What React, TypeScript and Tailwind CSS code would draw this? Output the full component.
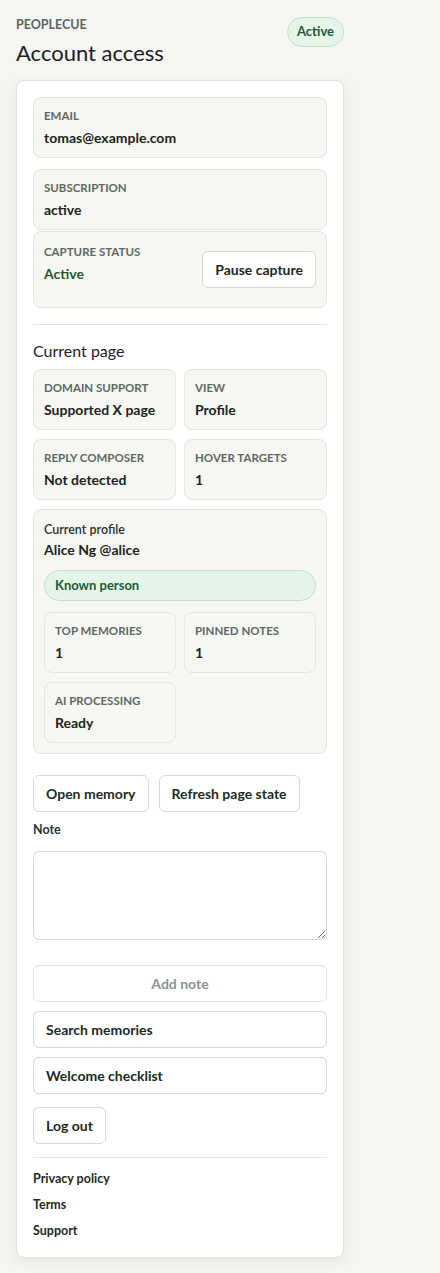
import React from 'react';

const font = "font-['Segoe_UI','Lato','Noto_Sans',sans-serif]";

const Field: React.FC<{ label: string; value: string; className?: string }> = ({ label, value, className }) => (
    <div className={`rounded-lg border border-[#e3e5df] bg-[#f6f6f2] px-[10px] py-[10px] ${className ?? ''}`}>
        <div className="text-[11.5px] font-bold uppercase leading-4 text-[#5d6964]">{label}</div>
        <div className="mt-[5px] text-[14px] font-bold leading-[18px] text-[#1c2420]">{value}</div>
    </div>
);

const Btn: React.FC<{ children: React.ReactNode; className?: string; disabled?: boolean }> = ({ children, className, disabled }) => (
    <button
        disabled={disabled}
        className={`h-[37px] rounded-md border bg-white px-[12px] text-[14px] font-bold ${disabled ? 'border-[#e3e5df] text-[#8a948f]' : 'border-[#d3d9d3] text-[#1c2a24]'} ${className ?? ''}`}
    >
        {children}
    </button>
);

export default function App() {
    return (
        <div className={`min-h-[1273px] bg-[#f5f5f1] ${font}`}>
            <div className="w-[360px] px-4 pt-4 pb-4">
                {/* header */}
                <div className="flex items-start justify-between">
                    <div>
                        <div className="mt-[1px] text-[12.5px] font-bold uppercase leading-4 text-[#5a6661]">PeopleCue</div>
                        <h1 className="mt-[4px] text-[22px] leading-8 text-[#1a211e]">Account access</h1>
                    </div>
                    <span className="mt-[1px] inline-flex h-[30px] items-center rounded-full border border-[#c4e0cb] bg-[#e5f4e9] px-[9px] text-[13px] font-bold text-[#1f5a35]">
                        Active
                    </span>
                </div>

                {/* card */}
                <div className="mt-[11px] rounded-lg border border-[#dfe3dc] bg-white px-4 pt-4 pb-[18px] shadow-[0_4px_14px_rgba(40,60,40,0.07)]">
                    <Field label="Email" value="tomas@example.com" />
                    <Field label="Subscription" value="active" className="mt-[11px]" />
                    <div className="flex h-[77px] items-start justify-between rounded-lg border border-[#e3e5df] bg-[#f6f6f2] px-[10px] pt-[12px] mt-px">
                        <div>
                            <div className="text-[11.5px] font-bold uppercase leading-4 text-[#5d6964]">Capture status</div>
                            <div className="mt-[5px] text-[14px] font-bold leading-[18px] text-[#1f5a35]">Active</div>
                        </div>
                        <Btn className="mt-[7px]">Pause capture</Btn>
                    </div>

                    <div className="mt-4 h-px bg-[#e3e5df]" />

                    <h2 className="mt-[14px] text-[16px] leading-6 text-[#1a211e]">Current page</h2>
                    <div className="mt-[6px] grid grid-cols-2 gap-x-2 gap-y-[9px]">
                        <Field label="Domain support" value="Supported X page" />
                        <Field label="View" value="Profile" />
                        <Field label="Reply composer" value="Not detected" />
                        <Field label="Hover targets" value="1" />
                    </div>

                    <div className="mt-[9px] rounded-lg border border-[#e3e5df] bg-[#f6f6f2] p-[10px]">
                        <div className="text-[12.5px] font-semibold leading-5 text-[#2a3430]">Current profile</div>
                        <div className="text-[14px] font-bold leading-5 text-[#1c2420]">Alice Ng @alice</div>
                        <div className="mt-[10px] flex h-[31px] items-center rounded-full border border-[#c4e0cb] bg-[#e5f4e9] px-[10px] text-[13px] font-bold text-[#1f5a35]">
                            Known person
                        </div>
                        <div className="mt-[11px] grid grid-cols-2 gap-x-2 gap-y-[9px]">
                            <Field label="Top memories" value="1" />
                            <Field label="Pinned notes" value="1" />
                            <Field label="AI processing" value="Ready" />
                        </div>
                    </div>

                    <div className="mt-[21px] flex gap-[10px]">
                        <Btn>Open memory</Btn>
                        <Btn>Refresh page state</Btn>
                    </div>

                    <label className="mt-[10px] block text-[12.5px] font-bold leading-4 text-[#2a3430]">Note</label>
                    <textarea className="mt-[13px] block h-[89px] w-full resize-y rounded-md border border-[#cfd6d0] bg-white" />

                    <Btn disabled className="mt-[25px] w-full">Add note</Btn>
                    <Btn className="mt-[9px] w-full text-left">Search memories</Btn>
                    <Btn className="mt-[9px] w-full text-left">Welcome checklist</Btn>
                    <div className="mt-[13px]">
                        <Btn>Log out</Btn>
                    </div>

                    <div className="mt-[13px] h-px bg-[#e3e5df]" />

                    <div className="mt-[13px] flex flex-col gap-[10px] text-[12.5px] font-bold leading-4 text-[#1f2a25]">
                        <a>Privacy policy</a>
                        <a>Terms</a>
                        <a>Support</a>
                    </div>
                </div>
            </div>
        </div>
    );
}
